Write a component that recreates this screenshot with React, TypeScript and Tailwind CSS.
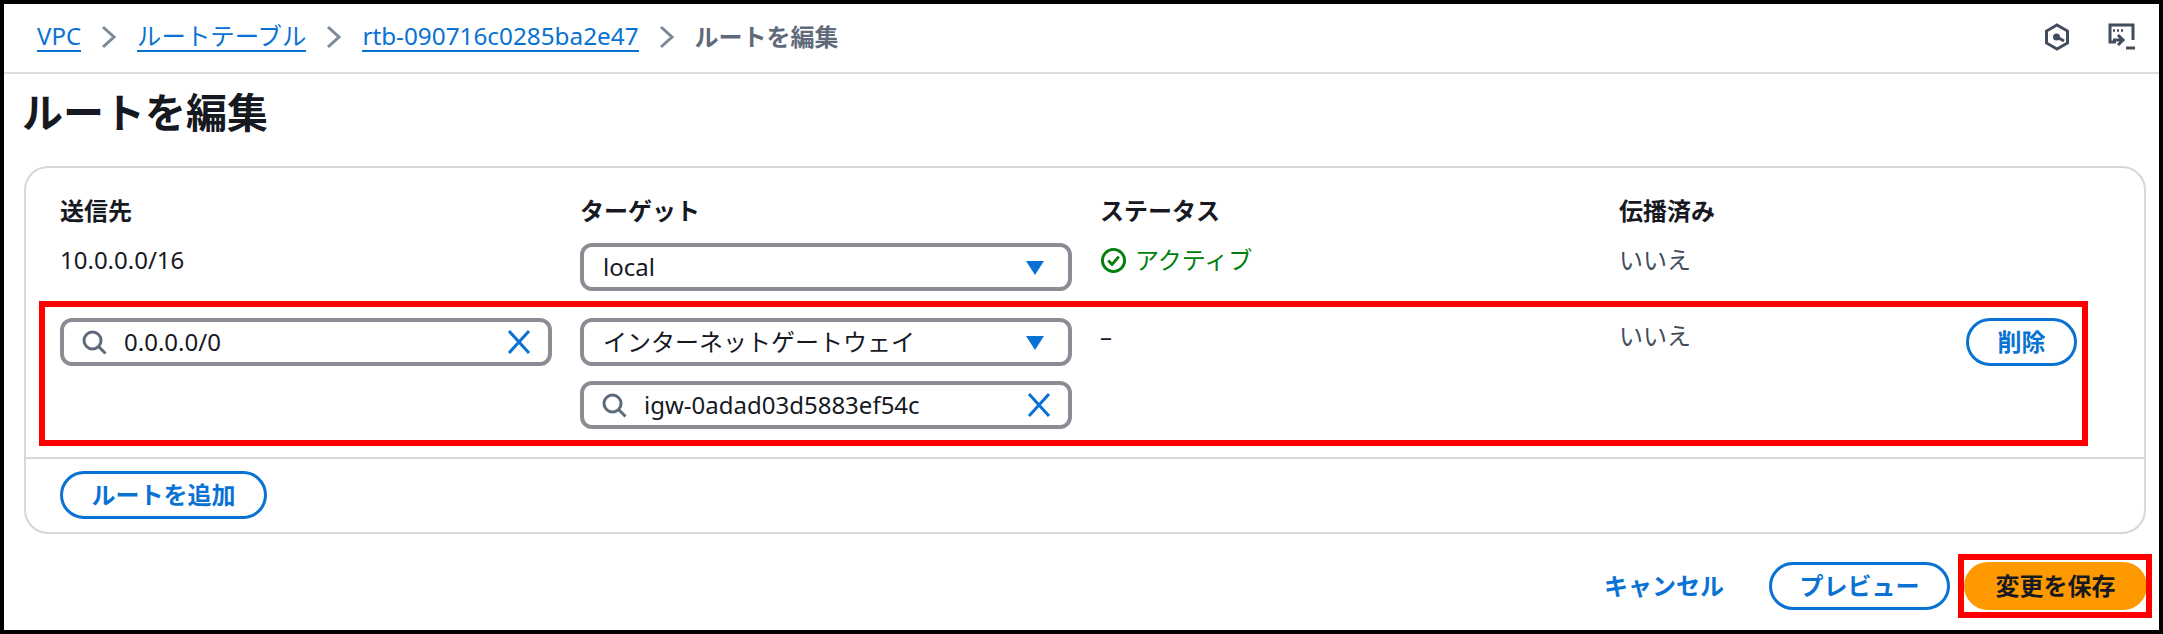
import React from "react";

const Sep = () => (
  <svg width="20" height="24" viewBox="0 0 20 24" fill="none" className="mx-[18px] shrink-0">
    <path d="M4 2l11 10L4 22" stroke="#7d8998" strokeWidth="3" />
  </svg>
);
const Search = () => (
  <svg width="27" height="27" viewBox="0 0 27 27" fill="none" className="shrink-0">
    <circle cx="11.500" cy="11.500" r="8.500" stroke="#5f6b7a" strokeWidth="3" />
    <path d="M17.500 17.500l7 7" stroke="#5f6b7a" strokeWidth="3" />
  </svg>
);
const X = () => (
  <svg width="24" height="24" viewBox="0 0 24 24" fill="none" className="shrink-0">
    <path d="M2 1l20 22M22 1L2 23" stroke="#0972d3" strokeWidth="3" />
  </svg>
);
const Caret = () => (
  <svg width="18" height="15" viewBox="0 0 18 15" className="shrink-0">
    <path d="M0 1h18L9 15z" fill="#0972d3" />
  </svg>
);
const field = "flex h-[48px] items-center rounded-[12px] border-[4px] border-[#8c8c94] bg-white text-[24px] text-[#16191f]";

function SearchField({ value }: { value: string }) {
  return (
    <div className={field + " pl-[17px] pr-[17px]"}>
      <Search />
      <span className="flex-1 pl-[16px]">{value}</span>
      <X />
    </div>
  );
}
function SelectField({ value }: { value: string }) {
  return (
    <div className={field + " justify-between pl-[19px] pr-[24px]"}>
      <span>{value}</span>
      <Caret />
    </div>
  );
}
const Pill = ({ children, className }: { children: React.ReactNode; className: string }) => (
  <div className={"flex h-[48px] items-center justify-center rounded-full border-[3px] border-[#0972d3] bg-white text-[24px] font-bold text-[#0972d3] " + className}>
    {children}
  </div>
);
const Head = ({ children }: { children: React.ReactNode }) => (
  <div className="text-[24px] font-bold leading-[28px] text-[#16191f]">{children}</div>
);
const cols = "grid grid-cols-[492px_492px_491px_1fr] gap-x-[28px]";

export default function App() {
  return (
    <div
      className="relative h-[634px] w-[2163px] overflow-hidden border-[4px] border-black bg-white text-[#16191f]"
      style={{ fontFamily: '"Noto Sans", "Noto Sans CJK JP", sans-serif' }}
    >
      <header className="flex h-[70px] items-center justify-between border-b-2 border-[#dcdcdc] pb-[2px] pl-[33px] pr-[22px] text-[24px]">
        <nav className="flex items-center">
          <a className="border-b-2 border-[#0972d3] leading-[28px] text-[#0972d3]">VPC</a>
          <Sep />
          <a className="border-b-2 border-[#0972d3] text-[24.400px] leading-[28px] text-[#0972d3]">ルートテーブル</a>
          <Sep />
          <a className="border-b-2 border-[#0972d3] text-[24.300px] leading-[28px] text-[#0972d3]">rtb-090716c0285ba2e47</a>
          <Sep />
          <span className="font-bold text-[#5f6b7a]">ルートを編集</span>
        </nav>
        <div className="flex items-center gap-[36px]">
          <svg width="28" height="28" viewBox="0 0 28 28" fill="none">
            <path d="M14 2l10.500 6v12L14 26 3.500 20V8z" stroke="#414d5c" strokeWidth="3" />
            <circle cx="13.500" cy="14" r="3.500" fill="#414d5c" />
            <path d="M14 14l7 4" stroke="#414d5c" strokeWidth="3" />
          </svg>
          <svg width="30" height="30" viewBox="0 0 30 30" fill="none">
            <path d="M9 20H3V3h23v15" stroke="#414d5c" strokeWidth="3" />
            <path d="M6 8.500h2m2 0h2m2 0h2" stroke="#414d5c" strokeWidth="2.500" />
            <path d="M6 18h9m-4-5l5 5-5 5" stroke="#414d5c" strokeWidth="3" />
            <path d="M19 26h9" stroke="#414d5c" strokeWidth="3" />
          </svg>
        </div>
      </header>

      <h1 className="pl-[18px] pt-[13px] text-[41px] font-bold leading-[50px] text-[#16191f]">ルートを編集</h1>

      <section className="ml-[20px] mr-[13px] mt-[29px] rounded-[24px] border-2 border-[#d5d7dc] bg-white">
        <div className="px-[34px] pt-[29px]">
          <div className={cols}>
            <Head>送信先</Head>
            <Head>ターゲット</Head>
            <Head>ステータス</Head>
            <Head>伝播済み</Head>
          </div>
          <div className={cols + " mt-[18px] text-[24px]"}>
            <div className="leading-[34px]">10.0.0.0/16</div>
            <SelectField value="local" />
            <div className="flex items-center gap-[8px] self-start leading-[34px] text-[#037f0c]">
              <svg width="27" height="27" viewBox="0 0 28 28" fill="none">
                <circle cx="14" cy="14" r="11.500" stroke="#037f0c" strokeWidth="3" />
                <path d="M8.500 14l4 4 7-8" stroke="#037f0c" strokeWidth="3" />
              </svg>
              アクティブ
            </div>
            <div className="leading-[34px] text-[#414d5c]">いいえ</div>
          </div>
          <div className={cols + " mt-[27px] text-[24px]"}>
            <SearchField value="0.0.0.0/0" />
            <div className="flex flex-col gap-[15px]">
              <SelectField value="インターネットゲートウェイ" />
              <SearchField value="igw-0adad03d5883ef54c" />
            </div>
            <div className="leading-[36px]">–</div>
            <div className="flex items-start justify-between">
              <div className="leading-[36px] text-[#414d5c]">いいえ</div>
              <Pill className="mr-[33px] w-[111px]">削除</Pill>
            </div>
          </div>
        </div>
        <div className="mt-[28px] border-t-2 border-[#d5d7dc] px-[34px] pb-[13px] pt-[12px]">
          <Pill className="w-[207px]">ルートを追加</Pill>
        </div>
      </section>

      <footer className="mt-[28px] flex items-center justify-end pr-[12px]">
        <span className="mr-[45px] text-[24px] font-bold text-[#0972d3]">キャンセル</span>
        <Pill className="w-[181px]">プレビュー</Pill>
        <div className="ml-[14px] flex h-[48px] w-[183px] items-center justify-center rounded-full bg-[#ff9900] text-[24px] font-bold text-[#16191f]">
          変更を保存
        </div>
      </footer>

      <div className="pointer-events-none absolute left-[35px] top-[297px] h-[145px] w-[2049px] border-[6px] border-[#ff0000]" />
      <div className="pointer-events-none absolute left-[1954px] top-[550px] h-[64px] w-[194px] border-[6px] border-[#ff0000]" />
    </div>
  );
}
